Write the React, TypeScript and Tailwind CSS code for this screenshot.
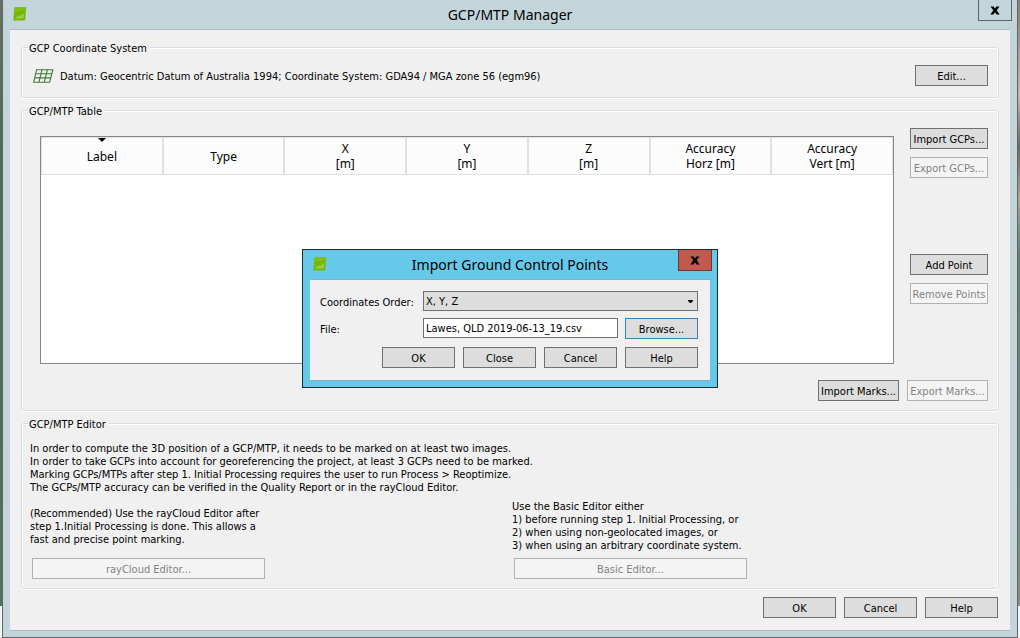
import type { ButtonHTMLAttributes, ReactNode } from "react";

const columns: string[][] = [
  ["Label"],
  ["Type"],
  ["X", "[m]"],
  ["Y", "[m]"],
  ["Z", "[m]"],
  ["Accuracy", "Horz [m]"],
  ["Accuracy", "Vert [m]"],
];

type ButtonProps = ButtonHTMLAttributes<HTMLButtonElement> & { focused?: boolean };

function Button({ className = "w-[73px]", focused = false, ...rest }: ButtonProps) {
  return (
    <button
      type="button"
      className={`h-[21px] shrink-0 whitespace-nowrap border bg-[#dddddd] pt-px text-center leading-[19px] disabled:border-[#adb2b5] disabled:bg-[#f4f4f4] disabled:text-[#838383] ${focused ? "border-[#3c7fb1]" : "border-[#707070]"} ${className}`}
      {...rest}
    />
  );
}

function Group({ title, className, children }: { title: string; className: string; children: ReactNode }) {
  return (
    <fieldset className="min-w-0 rounded-[3px] border border-[#d5dfe5] shadow-[inset_1px_1px_0_#fff,inset_-1px_0_0_#fff,0_1px_0_#fff]">
      <legend className="ml-[6px] h-[13px] bg-[#f0f0f0] pl-px pr-[3px] pt-px leading-[14px]">{title}</legend>
      <div className={className}>{children}</div>
    </fieldset>
  );
}

function AppIcon() {
  return (
    <svg width="14" height="14" viewBox="0 0 14 14" aria-hidden="true">
      <path d="M1.8 0.3H13.2L12.2 12.4Q12.1 13.5 11 13.5H0.4L1.3 1Z" fill="#74b800" />
      <path d="M1.8 0.3H13.2L13 3L1.2 5Z" fill="#7dc010" />
      <path d="M2.2 11.4L4 9.2L5.2 9.6L6.2 8.2L7.8 8.6L11.2 6.2L10.6 11.4Z" fill="#98cc48" />
    </svg>
  );
}

function CloseGlyph() {
  return (
    <svg width="10" height="9" viewBox="0 0 10 9" aria-hidden="true">
      <path d="M0.5 0.5H3.6L5 2.5L6.4 0.5H9.5L6.7 4.3L9.7 8.5H6.5L5 6.2L3.5 8.5H0.3L3.3 4.3Z" fill="#000" />
    </svg>
  );
}

function GridIcon() {
  return (
    <svg width="21" height="14" viewBox="0 0 21 14" fill="none" stroke="#3f7a3a" strokeWidth="1.1" aria-hidden="true">
      <path d="M3.6 0.7H19.9L16.6 13.2H0.7Z" />
      <path d="M2.7 4.7H18.8M1.7 8.9H17.8M9 0.7L6 13.2M14.4 0.7L11.3 13.2" />
    </svg>
  );
}

function TitleBar({ title, closeClass }: { title: string; closeClass: string }) {
  return (
    <header className="grid h-[29px] grid-cols-[1fr_auto_1fr] items-start">
      <div className="pl-[3px] pt-[7px]">
        <AppIcon />
      </div>
      <h1 className="font-['Noto_Sans',sans-serif] text-[14px] leading-[29px]">{title}</h1>
      <button
        type="button"
        aria-label="Close"
        className={`-mr-[2px] flex h-[21px] w-[34px] items-center justify-center justify-self-end border border-t-0 ${closeClass}`}
      >
        <CloseGlyph />
      </button>
    </header>
  );
}

function PointsTable() {
  return (
    <div className="mt-2 min-h-[228px] min-w-0 flex-1 border border-[#828790] bg-white">
      <table className="w-full table-fixed border-separate border-spacing-0 font-['Noto_Sans',sans-serif] text-[12px] leading-[15px]">
        <thead>
          <tr className="h-[38px]">
            {columns.map((lines, i) => (
              <th
                key={i}
                scope="col"
                className="relative border border-[#e0e0e0] bg-[#fcfcfc] p-0 font-normal"
              >
                {i === 0 && (
                  <svg className="absolute left-1/2 top-0 -ml-1" width="8" height="4" viewBox="0 0 8 4" aria-hidden="true">
                    <path d="M0 0H8L4 4Z" fill="#000" />
                  </svg>
                )}
                {lines.map((line) => (
                  <span key={line} className="block">
                    {line}
                  </span>
                ))}
              </th>
            ))}
          </tr>
        </thead>
        <tbody />
      </table>
    </div>
  );
}

function ImportDialog() {
  return (
    <div className="fixed inset-0 flex items-center justify-center pb-px">
      <div
        role="dialog"
        aria-label="Import Ground Control Points"
        className="w-[416px] border border-[#1f2a30] bg-[#66c9ea] px-[7px] pb-[6px]"
      >
        <TitleBar title="Import Ground Control Points" closeClass="border-[#6b3733] bg-[#c1594f]" />
        <form className="flex flex-col border-y border-[#7fb2c6] bg-[#f0f0f0] pb-3 pl-[10px] pr-3 pt-[11px]">
          <div className="flex items-center">
            <label htmlFor="order" className="w-[103px] shrink-0 pt-[2px]">
              Coordinates Order:
            </label>
            <div className="relative flex-1">
              <select
                id="order"
                className="block h-5 w-full appearance-none border border-[#707070] bg-[#dddddd] pl-[2px] pt-px leading-[18px]"
              >
                <option>X, Y, Z</option>
                <option>Y, X, Z</option>
              </select>
              <svg
                className="pointer-events-none absolute right-[5px] top-[9px]"
                width="5"
                height="3"
                viewBox="0 0 5 3"
                aria-hidden="true"
              >
                <path d="M0 0H5V1L3 3H2L0 1Z" fill="#000" />
              </svg>
            </div>
          </div>
          <div className="mt-[7px] flex items-start">
            <label htmlFor="file" className="w-[103px] shrink-0 pt-[5px]">
              File:
            </label>
            <input
              id="file"
              type="text"
              defaultValue="Lawes, QLD 2019-06-13_19.csv"
              className="h-5 min-w-0 flex-1 border border-[#707070] bg-white px-[2px] pt-px"
            />
            <Button className="ml-[7px] w-[73px]" focused>
              Browse...
            </Button>
          </div>
          <div className="mt-2 flex justify-end gap-2">
            <Button>OK</Button>
            <Button>Close</Button>
            <Button>Cancel</Button>
            <Button>Help</Button>
          </div>
        </form>
      </div>
    </div>
  );
}

export default function App() {
  return (
    <div className="flex min-h-screen bg-[linear-gradient(#6b6f60,#4a6b55_25%,#4f7359_95%,#f4f4f0_95%)] pl-[2px] font-['DejaVu_Sans_Condensed','DejaVu_Sans',sans-serif] text-[11px] leading-[13px] text-black">
      <main className="flex min-w-0 flex-1 flex-col border-x border-b border-[#5b656b] bg-[#c3d5db] px-[7px] pb-[6px]">
        <TitleBar title="GCP/MTP Manager" closeClass="border-[#5b656b]" />
        <div className="flex flex-1 flex-col gap-[6px] border-y border-[#aabbc1] bg-[#f0f0f0] px-[11px] pb-[11px] pt-[11px]">
          <Group title="GCP Coordinate System" className="flex items-center pb-[11px] pl-[11px] pr-[10px] pt-[11px]">
            <GridIcon />
            <p className="ml-[6px] flex-1 pt-[2px]">
              Datum: Geocentric Datum of Australia 1994; Coordinate System: GDA94 / MGA zone 56 (egm96)
            </p>
            <Button>Edit...</Button>
          </Group>

          <Group title="GCP/MTP Table" className="flex flex-col gap-4 pb-[9px] pl-[18px] pr-[10px] pt-[11px]">
            <div className="flex gap-4">
              <PointsTable />
              <div className="flex w-[78px] shrink-0 flex-col gap-2">
                <Button className="w-full">Import GCPs...</Button>
                <Button className="w-full" disabled>
                  Export GCPs...
                </Button>
                <Button className="mt-[68px] w-full">Add Point</Button>
                <Button className="w-full" disabled>
                  Remove Points
                </Button>
              </div>
            </div>
            <div className="flex justify-end gap-2">
              <Button className="w-[81px]">Import Marks...</Button>
              <Button className="w-[81px]" disabled>
                Export Marks...
              </Button>
            </div>
          </Group>

          <Group title="GCP/MTP Editor" className="pb-[9px] pl-2 pr-1 pt-3">
            <p>
              In order to compute the 3D position of a GCP/MTP, it needs to be marked on at least two images.
              <br />
              In order to take GCPs into account for georeferencing the project, at least 3 GCPs need to be marked.
              <br />
              Marking GCPs/MTPs after step 1. Initial Processing requires the user to run Process &gt; Reoptimize.
              <br />
              The GCPs/MTP accuracy can be verified in the Quality Report or in the rayCloud Editor.
            </p>
            <div className="mt-[6px] grid grid-cols-2">
              <div className="flex flex-col justify-end gap-3">
                <p>
                  (Recommended) Use the rayCloud Editor after
                  <br />
                  step 1.Initial Processing is done. This allows a
                  <br />
                  fast and precise point marking.
                </p>
                <Button className="ml-[2px] w-[233px]" disabled>
                  rayCloud Editor...
                </Button>
              </div>
              <div className="flex flex-col justify-end gap-[6px]">
                <p>
                  Use the Basic Editor either
                  <br />
                  1) before running step 1. Initial Processing, or
                  <br />
                  2) when using non-geolocated images, or
                  <br />
                  3) when using an arbitrary coordinate system.
                </p>
                <Button className="ml-[2px] w-[233px]" disabled>
                  Basic Editor...
                </Button>
              </div>
            </div>
          </Group>

          <div className="mt-[2px] flex justify-end gap-2 pr-px">
            <Button>OK</Button>
            <Button>Cancel</Button>
            <Button>Help</Button>
          </div>
        </div>
      </main>
      <div className="w-[2px] shrink-0 bg-[linear-gradient(#8a7f6c,#c9b898_15%,#6c6858_23%,#b5a583_31%,#64806a_40%,#7a8c72_80%,#958b76_95%,#f4f4f4_95%)]" />
      <ImportDialog />
    </div>
  );
}
